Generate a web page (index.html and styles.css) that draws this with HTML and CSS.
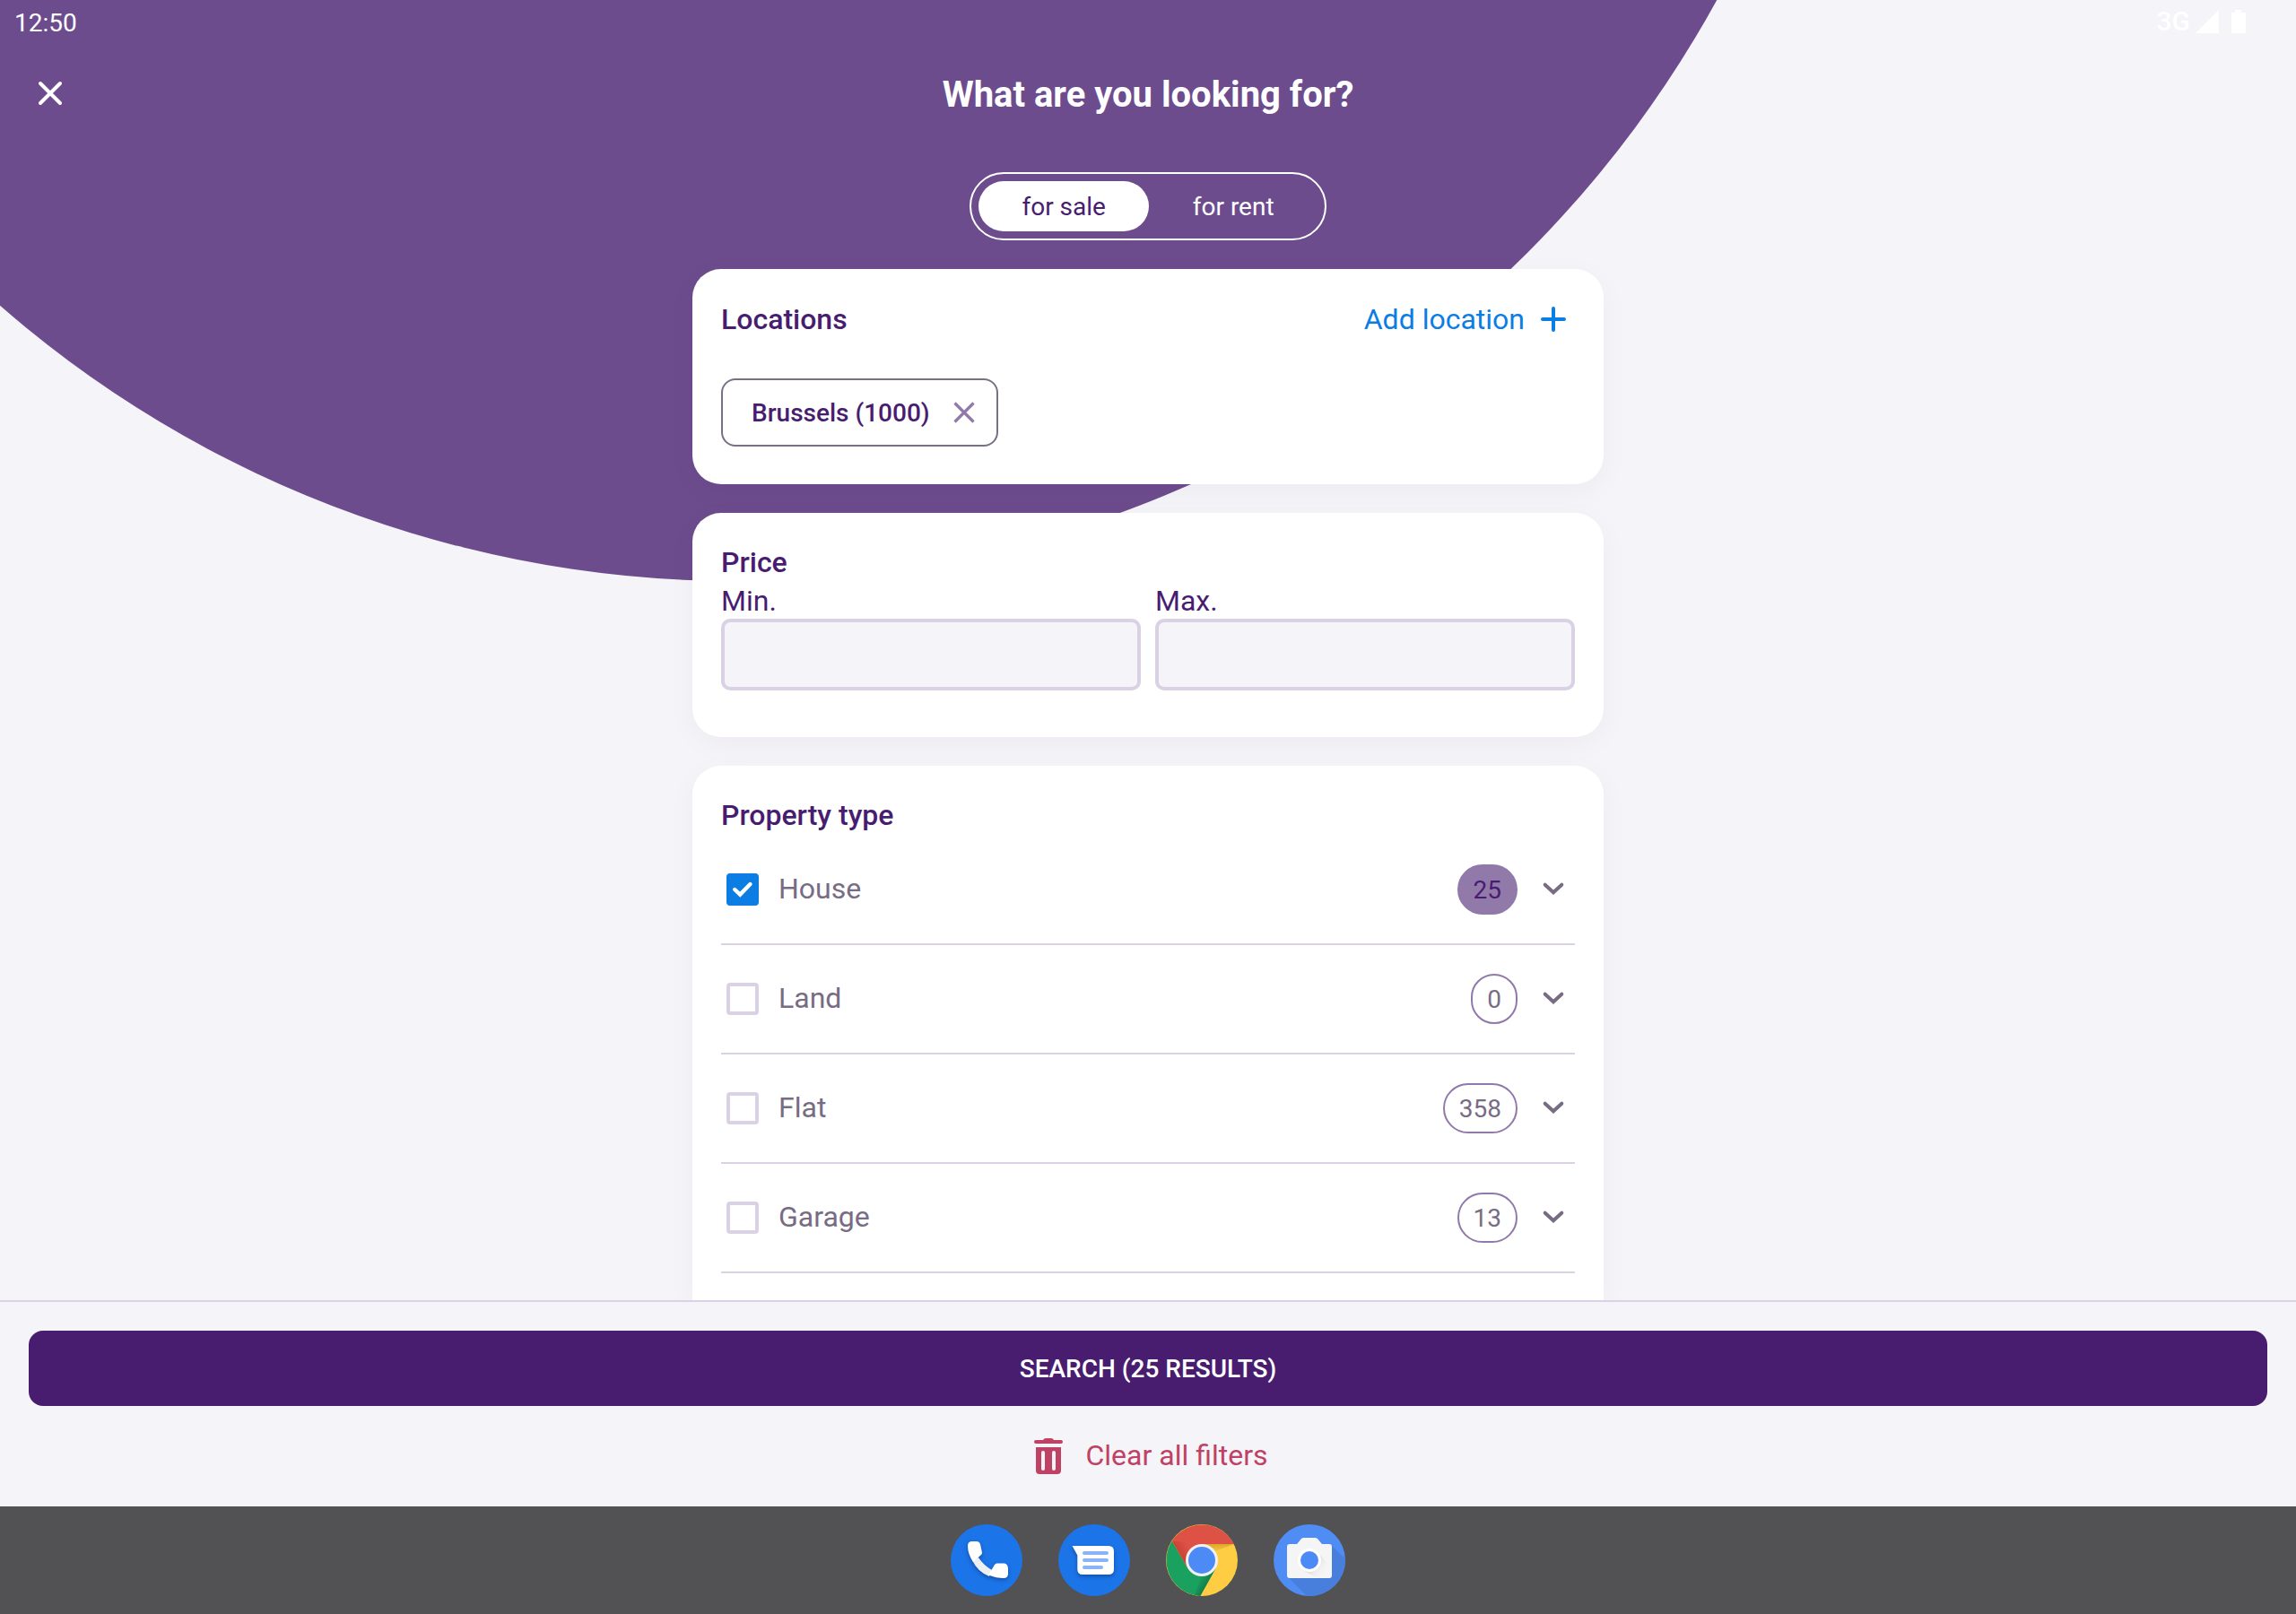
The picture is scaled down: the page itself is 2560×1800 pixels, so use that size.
FILE: index.html
```html
<!DOCTYPE html>
<html lang="en">
<head>
  <meta charset="utf-8">
  <meta name="viewport" content="width=device-width, initial-scale=1">
  <title>What are you looking for?</title>
  <link rel="stylesheet" href="styles.css">
</head>
<body>
  <div class="backdrop"></div>

  <div class="status-bar">
    <span>12:50</span>
    <div class="status-icons">
      <span class="network">3G</span>
      <svg width="26" height="26" viewBox="0 0 26 26" aria-hidden="true"><path d="M26 0V26H0Z" fill="#fff"/></svg>
      <svg width="16" height="26" viewBox="0 0 16 26" aria-hidden="true"><path d="M4 0h7v3h5v23H0V3h4Z" fill="#fff"/></svg>
    </div>
  </div>

  <header class="app-bar">
    <button class="icon-button" type="button" aria-label="Close">
      <svg width="48" height="48" viewBox="0 0 48 48"><path d="M13 13 35 35M35 13 13 35" stroke="#fff" stroke-width="4" stroke-linecap="round"/></svg>
    </button>
    <h1 class="title">What are you looking for?</h1>
  </header>

  <main class="filters">
    <div class="toggle" role="group" aria-label="Transaction">
      <button class="toggle-option selected" type="button" aria-pressed="true">for sale</button>
      <button class="toggle-option" type="button" aria-pressed="false">for rent</button>
    </div>

    <section class="card">
      <div class="card-head">
        <h2 class="heading">Locations</h2>
        <button class="add-button" type="button">Add location
          <svg width="48" height="48" viewBox="0 0 48 48" aria-hidden="true"><path d="M24 12V36M12 24H36" stroke="#0b7de3" stroke-width="4" stroke-linecap="round"/></svg>
        </button>
      </div>
      <button class="chip" type="button" aria-label="Remove Brussels (1000)"><span class="chip-text">Brussels (1000)</span>
        <svg width="24" height="24" viewBox="0 0 24 24" aria-hidden="true"><path d="M1.500 1.500 22.500 22.500M22.500 1.500 1.500 22.500" stroke="#9179a9" stroke-width="3.300"/></svg>
      </button>
    </section>

    <section class="card price">
      <h2 class="heading">Price</h2>
      <div class="range">
        <label class="field">Min.<input class="field-input" type="text" inputmode="numeric"></label>
        <label class="field">Max.<input class="field-input" type="text" inputmode="numeric"></label>
      </div>
    </section>

    <section class="card types">
      <h2 class="heading">Property type</h2>
      <ul class="type-list">
        <li class="type-row">
          <label class="type-label"><span class="check"><input class="check-input" type="checkbox" checked><svg class="tick" width="36" height="36" viewBox="0 0 36 36" aria-hidden="true"><path d="M9.200 18 15.200 23.600 26.500 12"/></svg></span><span class="type-name">House</span></label>
          <span class="count active">25</span>
          <button class="icon-button" type="button" aria-label="Show house types"><svg class="chevron" width="48" height="48" viewBox="0 0 48 48"><path d="M14.700 18.700 24 27.300 33.300 18.700"/></svg></button>
        </li>
        <li class="type-row">
          <label class="type-label"><span class="check"><input class="check-input" type="checkbox"></span><span class="type-name">Land</span></label>
          <span class="count">0</span>
          <button class="icon-button" type="button" aria-label="Show land types"><svg class="chevron" width="48" height="48" viewBox="0 0 48 48"><path d="M14.700 18.700 24 27.300 33.300 18.700"/></svg></button>
        </li>
        <li class="type-row">
          <label class="type-label"><span class="check"><input class="check-input" type="checkbox"></span><span class="type-name">Flat</span></label>
          <span class="count">358</span>
          <button class="icon-button" type="button" aria-label="Show flat types"><svg class="chevron" width="48" height="48" viewBox="0 0 48 48"><path d="M14.700 18.700 24 27.300 33.300 18.700"/></svg></button>
        </li>
        <li class="type-row">
          <label class="type-label"><span class="check"><input class="check-input" type="checkbox"></span><span class="type-name">Garage</span></label>
          <span class="count">13</span>
          <button class="icon-button" type="button" aria-label="Show garage types"><svg class="chevron" width="48" height="48" viewBox="0 0 48 48"><path d="M14.700 18.700 24 27.300 33.300 18.700"/></svg></button>
        </li>
      </ul>
    </section>
  </main>

  <footer class="actions">
    <button class="search-button" type="submit">SEARCH (25 RESULTS)</button>
    <button class="clear-button" type="button">
      <svg width="32" height="40" viewBox="0 0 32 40" aria-hidden="true"><path fill="#bf4264" d="M2 2H10Q11 0 13 0H19Q21 0 22 2H30A2 2 0 0 1 30 6H2A2 2 0 0 1 2 2Z"/><path fill="#bf4264" fill-rule="evenodd" d="M2 10H30V36A4 4 0 0 1 26 40H6A4 4 0 0 1 2 36ZM10 14Q8 14 8 16V34Q8 36 10 36Q12 36 12 34V16Q12 14 10 14ZM22 14Q20 14 20 16V34Q20 36 22 36Q24 36 24 34V16Q24 14 22 14Z"/></svg>
      <span class="clear-text">Clear all filters</span>
    </button>
  </footer>

  <nav class="dock" aria-label="Apps">
    <a class="dock-app" href="#phone" aria-label="Phone">
      <svg width="80" height="80" viewBox="0 0 80 80">
        <circle cx="40" cy="40" r="40" fill="#1b74e8"/>
        <g class="lifted">
          <path d="M24 40 31 37Q37 46 46 51L43 58Q30 53 24 40Z" fill="#eeeff1"/>
          <path d="M19 24Q19 19 24 19H28.500Q32.500 19 33.200 23L35 31.500Q35 33 34 34L25 42Q19 33 19 24Z" fill="#fff"/>
          <path d="M59 60Q64 60 64 55V50.500Q64 44 60 43.500L51.500 43.500Q50 43.500 49 45L42 56.500Q51 60 59 60Z" fill="#fff"/>
        </g>
      </svg>
    </a>
    <a class="dock-app" href="#messages" aria-label="Messages">
      <svg width="80" height="80" viewBox="0 0 80 80">
        <circle cx="40" cy="40" r="40" fill="#1b74e8"/>
        <path class="lifted" d="M15.500 24H56Q62 24 62 30V50Q62 56 56 56H27.300Q21.300 56 21.300 50V34.500Z" fill="#fff"/>
        <path d="M29 32H54M29 40H54M29 48H48" stroke="#8ab4f8" stroke-width="4" stroke-linecap="round"/>
      </svg>
    </a>
    <a class="dock-app" href="#chrome" aria-label="Chrome">
      <svg width="80" height="80" viewBox="0 0 80 80">
        <defs>
          <linearGradient id="red-shade" gradientUnits="userSpaceOnUse" x1="14" y1="34" x2="26" y2="27"><stop offset="0" stop-color="#a5291c" stop-opacity=".4"/><stop offset="1" stop-color="#a5291c" stop-opacity="0"/></linearGradient>
          <linearGradient id="yellow-shade" gradientUnits="userSpaceOnUse" x1="0" y1="22" x2="0" y2="32"><stop offset="0" stop-color="#b98310" stop-opacity=".5"/><stop offset="1" stop-color="#b98310" stop-opacity="0"/></linearGradient>
          <linearGradient id="green-shade" gradientUnits="userSpaceOnUse" x1="47" y1="66" x2="37" y2="60"><stop offset="0" stop-color="#0b5a35" stop-opacity=".5"/><stop offset="1" stop-color="#0b5a35" stop-opacity="0"/></linearGradient>
        </defs>
        <circle cx="40" cy="40" r="40" fill="#ffcd44"/>
        <path d="M6.800 18.500A40 40 0 0 0 38.300 80L55.600 49H24.400Z" fill="#1aa15f"/>
        <path d="M55.600 49 38.300 80 32 79 40 56Z" fill="url(#green-shade)"/>
        <path d="M6.800 18.500A40 40 0 0 1 75.800 22H40L24.400 49Z" fill="#de5145"/>
        <path d="M6.800 18.500 24.400 49 40 22Z" fill="url(#red-shade)"/>
        <path d="M40 22H75.800L50 32Z" fill="url(#yellow-shade)"/>
        <circle cx="40" cy="40" r="18" fill="#f1f1f1"/>
        <circle cx="40" cy="40" r="15" fill="#4c8bf5"/>
      </svg>
    </a>
    <a class="dock-app" href="#camera" aria-label="Camera">
      <svg width="80" height="80" viewBox="0 0 80 80">
        <defs>
          <clipPath id="camera-disc"><circle cx="40" cy="40" r="40"/></clipPath>
          <linearGradient id="lens-shade" gradientUnits="userSpaceOnUse" x1="44" y1="44" x2="58" y2="54"><stop offset="0" stop-color="#b5b5b5"/><stop offset="1" stop-color="#f5f5f5" stop-opacity="0"/></linearGradient>
        </defs>
        <circle cx="40" cy="40" r="40" fill="#4f8df5"/>
        <path d="M16 59 42 85H90V48L64 23V60Z" fill="#487fdc" clip-path="url(#camera-disc)"/>
        <path d="M18 22H26L31 16Q32 15 34 15H46Q48 15 49 16L54 22H62Q65 22 65 25V57Q65 60 62 60H18Q15 60 15 57V25Q15 22 18 22Z" fill="#f5f5f5"/>
        <path d="M50 32 62 46V52L54 58H45L31 50Z" fill="url(#lens-shade)" opacity=".4"/>
        <circle cx="40" cy="40" r="13" fill="#fff"/>
        <circle cx="40" cy="40" r="10" fill="#4c8bf5"/>
      </svg>
    </a>
  </nav>
</body>
</html>
```
FILE: styles.css
```css
* {
  box-sizing: border-box;
}

body {
  position: relative;
  display: flex;
  flex-direction: column;
  height: 100vh;
  margin: 0;
  overflow: hidden;
  background: #f5f4f9;
  color: #481d70;
  font-family: Roboto, "Liberation Sans", sans-serif;
  font-size: 32px;
  line-height: 42px;
}

button {
  padding: 0;
  border: 0;
  background: none;
  color: inherit;
  font: inherit;
  cursor: pointer;
}

svg {
  display: block;
  flex: none;
  fill: none;
}

/* Large disc rising out of the top left of the screen */
.backdrop {
  position: absolute;
  z-index: -1;
  bottom: calc(100% - 648px);
  left: calc(50% - 460px);
  width: 2496px;
  height: 2496px;
  border-radius: 50%;
  background: #6d4c8e;
  transform: translateX(-50%);
}

.status-bar {
  display: flex;
  justify-content: space-between;
  align-items: center;
  flex: none;
  height: 48px;
  padding: 4px 56px 0 16px;
  color: #fff;
  font-size: 28px;
}

.status-icons {
  display: flex;
  align-items: center;
  gap: 14px;
  padding-bottom: 4px;
}

.network {
  margin-right: -8px;
  font-size: 30px;
  font-weight: 500;
}

.app-bar {
  display: grid;
  grid-template-columns: 48px 1fr 48px;
  align-items: center;
  flex: none;
  height: 112px;
  padding: 0 32px;
  color: #fff;
}

.title {
  margin: 0;
  padding-top: 4px;
  font-size: 40px;
  font-weight: 700;
  line-height: 48px;
  text-align: center;
}

.icon-button {
  width: 48px;
  height: 48px;
}

.filters {
  display: flex;
  flex-direction: column;
  align-items: center;
  flex: 1;
  gap: 32px;
  min-height: 0;
  padding: 32px 32px 0;
  overflow: hidden;
}

.toggle {
  display: flex;
  flex: none;
  width: 398px;
  height: 76px;
  padding: 8px;
  border: 2px solid #fff;
  border-radius: 38px;
}

.toggle-option {
  flex: 1 1 auto;
  padding: 2px 48px 0;
  border-radius: 28px;
  color: #fff;
  font-size: 28px;
}

.toggle-option.selected {
  background: #fff;
  color: #481d70;
}

.card {
  flex: none;
  width: 100%;
  max-width: 1016px;
  padding: 32px 32px 42px;
  border-radius: 32px;
  background: #fff;
  box-shadow: 0 8px 32px rgba(40, 20, 60, 0.04);
}

.card.price {
  padding-bottom: 52px;
}

.card.types {
  flex: 1 0 auto;
  padding-bottom: 0;
  border-radius: 32px 32px 0 0;
}

.card-head {
  display: flex;
  justify-content: space-between;
  align-items: center;
  margin-bottom: 42px;
}

.heading {
  margin: 0;
  font-size: 32px;
  font-weight: 500;
  line-height: 46px;
}

.add-button {
  display: flex;
  align-items: center;
  gap: 8px;
  color: #0b7de3;
}

.chip {
  display: flex;
  align-items: center;
  gap: 26px;
  height: 76px;
  padding: 0 24px 0 32px;
  border: 2px solid #7a7083;
  border-radius: 16px;
  font-size: 28px;
  font-weight: 500;
}

.chip-text {
  padding-top: 2px;
}

.range {
  display: grid;
  grid-template-columns: 1fr 1fr;
  gap: 16px;
}

.field {
  display: flex;
  flex-direction: column;
  line-height: 40px;
}

.field-input {
  width: 100%;
  height: 80px;
  padding: 0 16px;
  border: 4px solid #dbd1e4;
  border-radius: 10px;
  background: #f5f4f9;
  color: inherit;
  font: inherit;
}

.type-list {
  margin: 0;
  padding: 0;
  list-style: none;
}

.type-row {
  display: flex;
  align-items: center;
  gap: 16px;
  height: 122px;
  border-bottom: 2px solid #dbd1e4;
  color: #786c85;
}

.type-label {
  display: flex;
  align-items: center;
  flex: 1;
  gap: 22px;
  padding-left: 6px;
}

.type-name,
.clear-text {
  padding-bottom: 2px;
}

.check {
  display: grid;
}

.check-input,
.tick {
  grid-area: 1 / 1;
}

.check-input {
  appearance: none;
  width: 36px;
  height: 36px;
  margin: 0;
  border: 4px solid #dbd1e4;
  border-radius: 4px;
}

.check-input:checked {
  border-color: #0b7de3;
  background: #0b7de3;
}

.tick {
  position: relative;
  pointer-events: none;
  stroke: #fff;
  stroke-width: 4.4;
  stroke-linecap: round;
}

.count {
  height: 56px;
  padding: 0 16px;
  border: 2px solid #9179a9;
  border-radius: 28px;
  font-size: 28px;
  line-height: 54px;
}

.count.active {
  background: #9179a9;
  color: #481d70;
}

.chevron {
  stroke: #786c85;
  stroke-width: 4;
  stroke-linecap: round;
}

.actions {
  display: flex;
  flex-direction: column;
  align-items: center;
  flex: none;
  gap: 32px;
  padding: 32px;
  border-top: 2px solid #dbd1e4;
  background: #f5f4f9;
}

.search-button {
  width: 100%;
  height: 84px;
  padding-top: 2px;
  border-radius: 16px;
  background: #481d70;
  color: #fff;
  font-size: 28px;
  font-weight: 500;
}

.clear-button {
  display: flex;
  align-items: center;
  gap: 26px;
  height: 48px;
  padding-left: 6px;
  color: #bf4264;
}

.dock {
  display: flex;
  justify-content: center;
  align-items: center;
  flex: none;
  gap: 40px;
  height: 120px;
  background: #525254;
}

.lifted {
  filter: drop-shadow(0 2px 2px rgba(10, 40, 100, 0.5));
}
```
